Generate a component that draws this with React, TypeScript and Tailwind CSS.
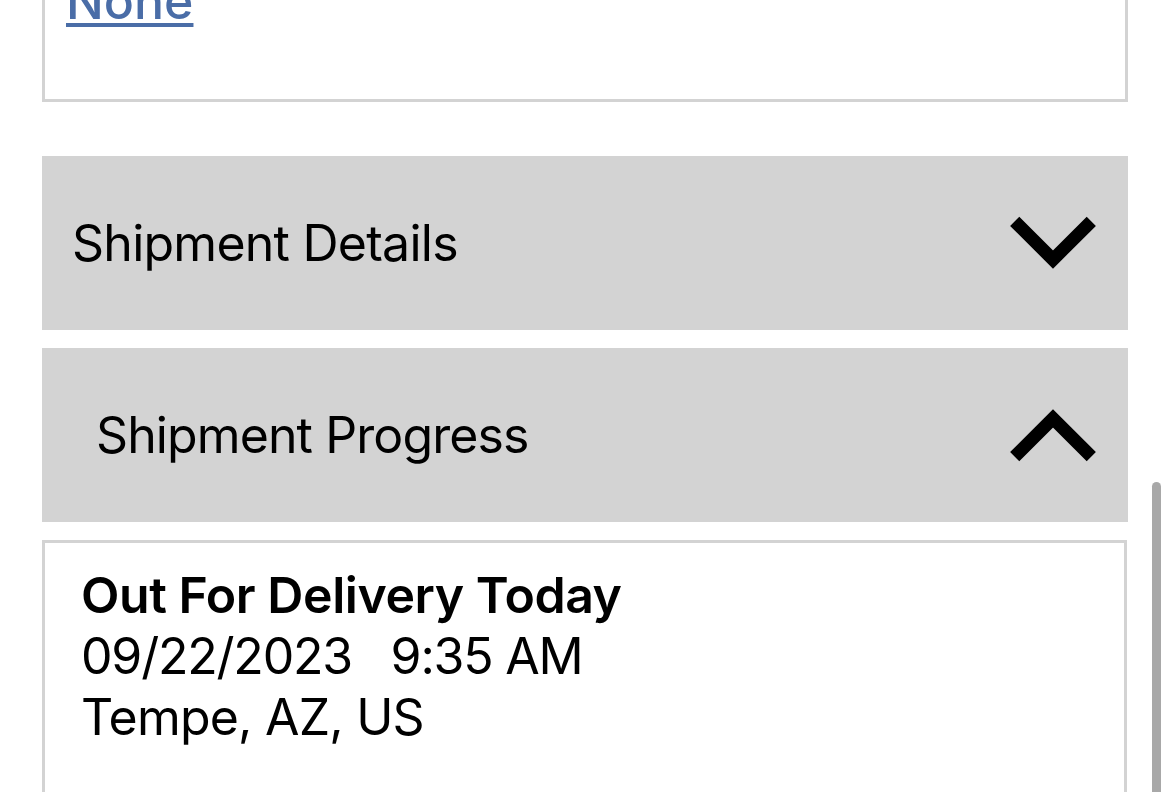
import React from "react";

function Chevron({ up }: { up?: boolean }) {
  return (
    <svg width="86" height="54" viewBox="0 0 86 54" className="shrink-0">
      <polyline
        points={up ? "4.7,48.7 43,10.5 81.3,48.7" : "4.7,5.3 43,43.5 81.3,5.3"}
        fill="none"
        stroke="#000"
        strokeWidth="13"
        strokeLinejoin="miter"
        strokeLinecap="butt"
        strokeMiterlimit="10"
      />
    </svg>
  );
}

export default function App() {
  return (
    <div
      className="relative w-[1170px] h-[792px] overflow-hidden bg-white text-black"
      style={{ fontFamily: "Inter, 'Noto Sans', sans-serif" }}
    >
      <div className="px-[42px] flex flex-col">
        <div className="-mt-[29px] h-[131px] border-[3px] border-t-0 border-[#d3d3d3] pl-[21px]">
          <a className="block text-[50px] leading-[60px] font-medium text-[#4a6da7] underline decoration-[4px] underline-offset-[4px]">
            None
          </a>
        </div>
        <div className="mt-[54px] h-[174px] bg-[#d3d3d3] flex items-center justify-between pl-[30px] pr-[32px]">
          <span className="text-[50px] leading-[60px] tracking-[-0.75px]">Shipment Details</span>
          <Chevron />
        </div>
        <div className="mt-[18px] h-[174px] bg-[#d3d3d3] flex items-center justify-between pl-[54px] pr-[32px]">
          <span className="text-[50px] leading-[60px] tracking-[-0.9px]">Shipment Progress</span>
          <Chevron up />
        </div>
        <div className="mt-[18px] h-[300px] border-[3px] border-[#d3d3d3] mr-[1px] pl-[36px] pt-[22px]">
          <div className="text-[50px] leading-[61px] font-semibold tracking-[-0.45px]">Out For Delivery Today</div>
          <div className="text-[50px] leading-[61px] whitespace-pre tracking-[-1.2px]">09/22/2023   9:35 AM</div>
          <div className="text-[50px] leading-[61px] tracking-[-0.8px]">Tempe, AZ, US</div>
        </div>
      </div>
      <div className="absolute left-[1152px] top-[482px] w-[9px] h-[340px] rounded-full bg-[#a8a8a8]" />
    </div>
  );
}
